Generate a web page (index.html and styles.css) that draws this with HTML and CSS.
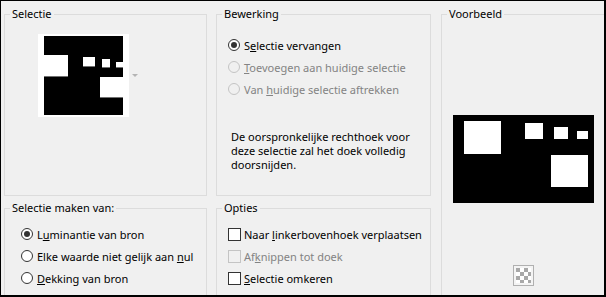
FILE: index.html
```html
<!DOCTYPE html>
<html lang="nl">
  <head>
    <meta charset="UTF-8" />
    <title>Selectie uit masker</title>
    <link rel="stylesheet" href="styles.css">
  </head>

  <body>
    <div class="window">
      <div class="panes">
        <fieldset class="group selection">
          <legend>Selectie</legend>
          <div class="group-body thumb-row">
            <svg class="thumb" width="91" height="83" viewBox="0 0 91 83">
              <rect width="91" height="83" fill="#fff" />
              <rect x="6" y="2" width="79" height="79" fill="#000" />
              <rect x="6" y="21" width="24" height="21" fill="#fff" />
              <rect x="6" y="42" width="24" height="1" fill="#707070" />
              <rect x="45" y="23" width="12" height="9" fill="#fff" />
              <rect x="45" y="32" width="12" height="1" fill="#707070" />
              <rect x="64" y="25" width="8" height="8" fill="#fff" />
              <rect x="64" y="33" width="8" height="1" fill="#707070" />
              <rect x="78" y="28" width="7" height="5" fill="#fff" />
              <rect x="78" y="33" width="7" height="1" fill="#707070" />
              <rect x="62" y="43" width="23" height="20" fill="#fff" />
              <rect x="62" y="63" width="23" height="1" fill="#707070" />
            </svg>
            <span class="drop-arrow"></span>
          </div>
        </fieldset>

        <fieldset class="group edit">
          <legend>Bewerking</legend>
          <div class="group-body">
            <label class="option"><span class="radio checked"></span><span>S<u>e</u>lectie vervangen</span></label>
            <label class="option disabled"><span class="radio"></span><span><u>T</u>oevoegen aan huidige selectie</span></label>
            <label class="option disabled"><span class="radio"></span><span>Van <u>h</u>uidige selectie aftrekken</span></label>
            <p class="note">De oorspronkelijke rechthoek voor<br>deze selectie zal het doek volledig<br>doorsnijden.</p>
          </div>
        </fieldset>

        <fieldset class="group preview">
          <legend>Voorbeeld</legend>
          <div class="group-body preview-body">
            <svg class="preview-image" width="141" height="88" viewBox="0 0 141 88">
              <rect width="141" height="88" fill="#000" />
              <rect x="11" y="6" width="37" height="33" fill="#fff" />
              <rect x="72" y="8" width="18" height="16" fill="#fff" />
              <rect x="101" y="12" width="14" height="12" fill="#fff" />
              <rect x="124" y="16" width="11" height="8" fill="#fff" />
              <rect x="98" y="40" width="37" height="32" fill="#fff" />
            </svg>
            <span class="checker">
              <svg width="21" height="21" viewBox="0 0 21 21">
                <rect x="0.5" y="0.5" width="20" height="20" fill="#f4f4f4" stroke="#b0b0b0" />
                <rect x="3" y="3" width="15" height="15" fill="#fff" />
                <path d="M3 3h4v4H3zM11 3h4v4h-4zM7 7h4v4H7zM15 7h3v4h-3zM3 11h4v4H3zM11 11h4v4h-4zM7 15h4v3H7zM15 15h3v3h-3z" fill="#a8a8a8" />
              </svg>
            </span>
          </div>
        </fieldset>

        <fieldset class="group source">
          <legend>Selectie maken van:</legend>
          <div class="group-body">
            <label class="option"><span class="radio checked"></span><span>L<u>u</u>minantie van bron</span></label>
            <label class="option"><span class="radio"></span><span>Elke waarde niet gelijk aan <u>n</u>ul</span></label>
            <label class="option"><span class="radio"></span><span><u>D</u>ekking van bron</span></label>
          </div>
        </fieldset>

        <fieldset class="group options">
          <legend>Opties</legend>
          <div class="group-body">
            <label class="option"><span class="check"></span><span>Naar <u>l</u>inkerbovenhoek verplaatsen</span></label>
            <label class="option disabled"><span class="check"></span><span>Af<u>k</u>nippen tot doek</span></label>
            <label class="option"><span class="check"></span><span><u>S</u>electie omkeren</span></label>
          </div>
        </fieldset>
      </div>
    </div>
  </body>
</html>
```

FILE: styles.css
```css
* {
  box-sizing: border-box;
}

body {
  margin: 0;
  background: #f0f0f0;
  color: #000;
  font-family: "Noto Sans", sans-serif;
  font-size: 11px;
}

.window {
  width: 606px;
  height: 297px;
  padding: 5px 0 0 3px;
  background: #f0f0f0;
  border-style: solid;
  border-color: #000;
  border-width: 1px 2px 2px 1px;
  overflow: hidden;
}

.panes {
  display: grid;
  grid-template-columns: 203px 215px 190px;
  grid-template-rows: 190px 100px;
  column-gap: 9px;
  row-gap: 4px;
}

.group {
  margin: 0;
  padding: 0;
  min-width: 0;
  border: 1px solid #dcdcdc;
}

.group legend {
  margin-left: 5px;
  padding: 0 2px;
  line-height: 16px;
}

/* Selectie */
.selection .group-body {
  padding: 12px 0 0 33px;
}

.thumb-row {
  display: flex;
  align-items: center;
  gap: 3px;
}

.thumb {
  display: block;
}

.drop-arrow {
  width: 0;
  height: 0;
  border-left: 3px solid transparent;
  border-right: 3px solid transparent;
  border-top: 3px solid #b4b4b4;
}

/* Bewerking / Opties / bron */
.edit .group-body {
  padding: 12px 0 0 11px;
}

.source .group-body {
  padding: 7px 0 0 16px;
}

.options .group-body {
  padding: 7px 0 0 11px;
}

.option {
  display: flex;
  align-items: center;
  height: 22px;
  gap: 4px;
  white-space: nowrap;
}

.option.disabled {
  color: #838383;
}

.radio {
  position: relative;
  width: 12px;
  height: 12px;
  border: 1px solid #333;
  border-radius: 50%;
  background: #fff;
}

.radio.checked::after {
  content: "";
  position: absolute;
  left: 2px;
  top: 2px;
  width: 6px;
  height: 6px;
  border-radius: 50%;
  background: #333;
}

.check {
  width: 13px;
  height: 13px;
  margin-right: -1px;
  border: 1px solid #333;
  background: #fff;
}

.disabled .radio,
.disabled .check {
  border-color: #c4c4c4;
  background: #f0f0f0;
}

.note {
  margin: 30px 0 0 3px;
  line-height: 14px;
}

/* Voorbeeld */
.preview {
  grid-column: 3;
  grid-row: 1 / 3;
  margin-left: 1px;
}

.preview-body {
  display: flex;
  flex-direction: column;
  align-items: center;
  width: 152px;
  padding: 93px 0 0 11px;
  gap: 62px;
}

.preview-image,
.checker svg {
  display: block;
}
```
